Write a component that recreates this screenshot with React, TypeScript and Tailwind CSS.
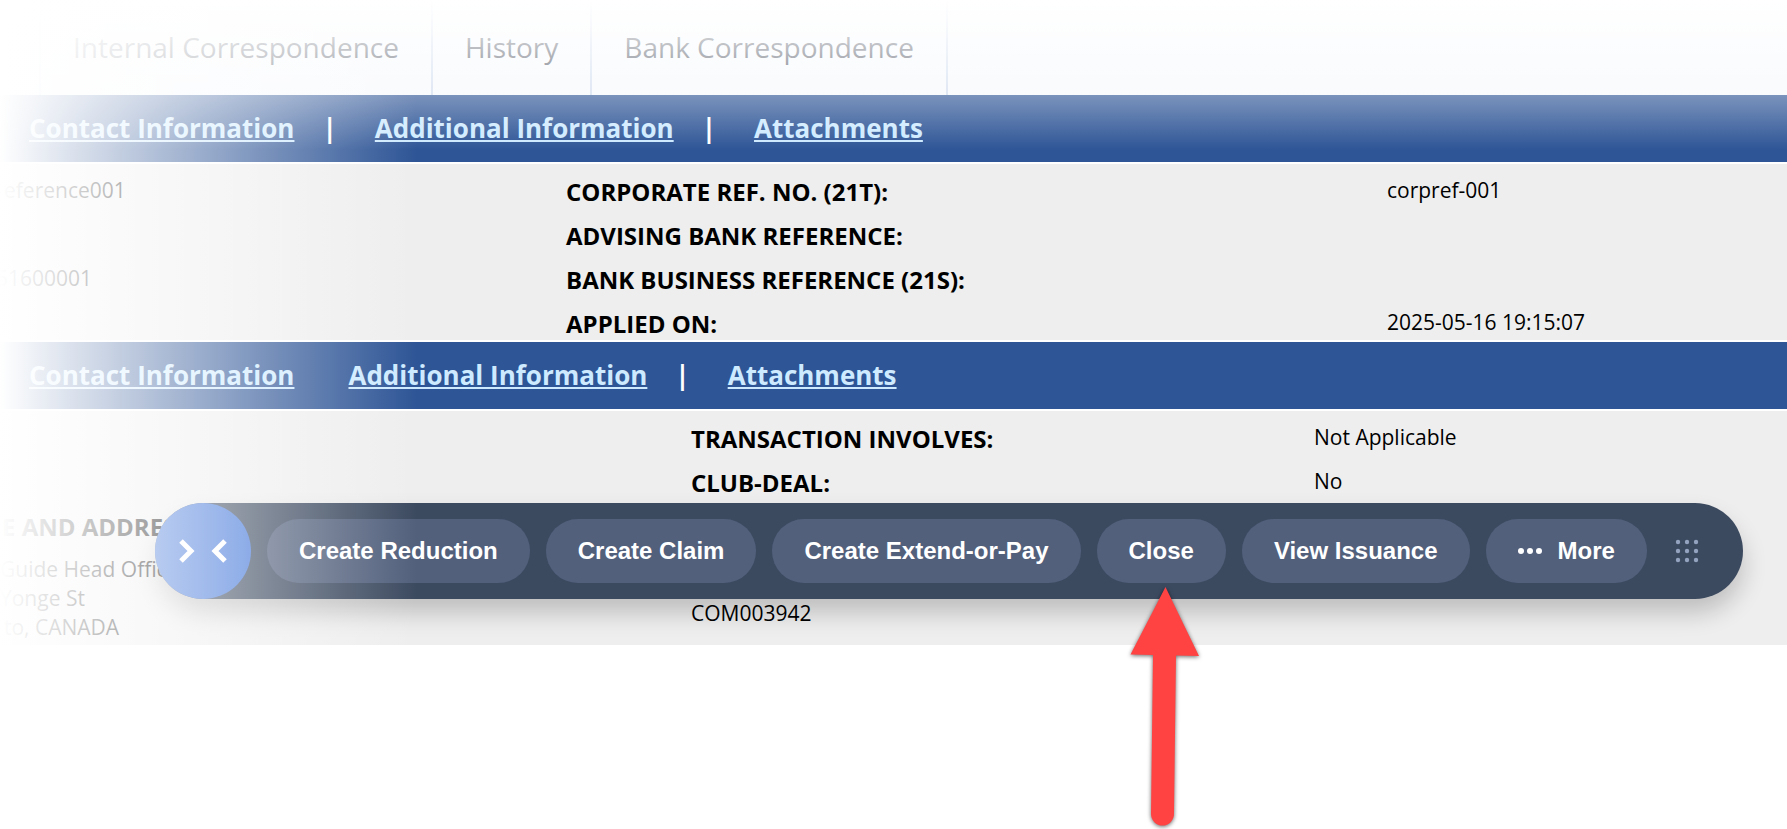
import type { ReactNode } from 'react'

const TABS = ['Internal Correspondence', 'History', 'Bank Correspondence']

function Separator() {
  return <span className="mr-[38px] ml-[28px] text-white" aria-hidden="true">|</span>
}

function SectionNav({ label, splitFirst }: { label: string; splitFirst: boolean }) {
  return (
    <nav aria-label={label} className="flex h-[69px] items-center border-b-2 border-white bg-[#2e5596] pl-[29px] text-[26px] font-bold text-[#cdeaff]">
      <a href="#contact" className="underline">Contact Information</a>
      {splitFirst ? <Separator /> : <span className="w-[54px]" />}
      <a href="#additional" className="underline">Additional Information</a>
      <Separator />
      <a href="#attachments" className="underline">Attachments</a>
    </nav>
  )
}

function Label({ children }: { children?: ReactNode }) {
  return <dt className="text-2xl leading-8 font-bold">{children}</dt>
}

function Value({ children }: { children?: ReactNode }) {
  return <dd className="text-[21px] leading-7">{children}</dd>
}

function ActionButton({ children }: { children: ReactNode }) {
  return (
    <button type="button" className="flex h-16 items-center gap-4 rounded-full bg-[#52607c] px-8 text-2xl font-bold hover:bg-[#5f6e8c]">
      {children}
    </button>
  )
}

function Arrow() {
  return (
    <svg className="pointer-events-none absolute top-16 left-[30px] z-20 h-[246px] w-[76px] max-w-none" viewBox="0 0 76 246" fill="#ff4343"
      style={{ filter: 'drop-shadow(0 1px 2px rgba(0,0,0,0.6))' }} aria-hidden="true">
      <path d="M38.5 4 L72 73 L49 72.5 L47 231 A11.5 11.5 0 0 1 24 231 L26 72 L3.5 71.5 Z" />
    </svg>
  )
}

function Toolbar() {
  return (
    <div role="toolbar" aria-label="Actions"
      className="absolute right-11 bottom-[46px] left-[155px] flex h-24 items-center gap-4 rounded-full bg-[#3c4a60] font-['Liberation_Sans',Arial,sans-serif] whitespace-nowrap text-white shadow-[0_14px_24px_rgba(0,0,0,0.2)]">
      <button type="button" aria-label="Collapse toolbar" className="flex h-24 w-24 shrink-0 items-center justify-center rounded-full bg-[#4175d8]">
        <svg className="h-6 w-12" viewBox="0 0 48 24" fill="none" stroke="currentColor" strokeWidth="5">
          <path d="M2 2 L12 12 L2 22 M46 2 L36 12 L46 22" />
        </svg>
      </button>
      <ActionButton>Create Reduction</ActionButton>
      <ActionButton>Create Claim</ActionButton>
      <ActionButton>Create Extend-or-Pay</ActionButton>
      <div className="relative">
        <ActionButton>Close</ActionButton>
        <Arrow />
      </div>
      <ActionButton>View Issuance</ActionButton>
      <ActionButton>
        <svg className="h-6 w-6" viewBox="0 0 24 24" fill="currentColor" aria-hidden="true">
          {[3, 12, 21].map((x) => <circle key={x} cx={x} cy="12" r="3" />)}
        </svg>
        More
      </ActionButton>
      <svg className="ml-3 h-6 w-6 cursor-grab" viewBox="0 0 24 24" fill="#94a3bf" aria-hidden="true">
        {[3, 12, 21].map((y) => [3, 12, 21].map((x) => <circle key={`${x}-${y}`} cx={x} cy={y} r="2.2" />))}
      </svg>
    </div>
  )
}

export default function App() {
  return (
    <div className="relative min-h-screen overflow-hidden bg-white font-['Open_Sans','Noto_Sans',sans-serif] text-black">
      {/* Tabs */}
      <div className="flex h-[95px] bg-[#f5f8fc] pl-[39px] text-[28px] text-[#2b3342]">
        {TABS.map((tab, i) => (
          <button key={tab} type="button"
            className={`border-r-2 border-[#cfdbee] px-8 pb-0.5 ${i === 0 ? 'border-l-2' : ''}`}>
            {tab}
          </button>
        ))}
      </div>

      {/* Details */}
      <SectionNav label="Details" splitFirst />
      <dl className="grid grid-cols-[566fr_821fr_400fr] gap-y-3 border-b-2 border-white bg-[#eeeeee] pt-3">
        <dd className="pl-1 text-[21px] leading-7">eference001</dd>
        <Label>CORPORATE REF. NO. (21T):</Label>
        <Value>corpref-001</Value>
        <Value />
        <Label>ADVISING BANK REFERENCE:</Label>
        <Value />
        <dd className="-ml-1 text-[21px] leading-7">51600001</dd>
        <Label>BANK BUSINESS REFERENCE (21S):</Label>
        <Value />
        <Value />
        <Label>APPLIED ON:</Label>
        <Value>2025-05-16 19:15:07</Value>
      </dl>

      {/* Parties */}
      <SectionNav label="Parties" splitFirst={false} />
      <section className="relative bg-[#eeeeee]">
        <dl className="grid grid-cols-[691fr_623fr_473fr] gap-y-3 pt-3 pb-[3px]">
          <dd className="leading-8" />
          <Label>TRANSACTION INVOLVES:</Label>
          <Value>Not Applicable</Value>
          <dd className="leading-8" />
          <Label>CLUB-DEAL:</Label>
          <Value>No</Value>
          <dt className="pl-0.5 text-2xl leading-8 font-bold">E AND ADDRESS:</dt>
          <dd className="col-span-2" />
          <dd className="text-[21px] leading-[29px]">
            <div>Guide Head Office</div>
            <div>Yonge St</div>
            <div className="pl-1">to, CANADA</div>
          </dd>
          <dd className="pt-11 text-[21px] leading-7">COM003942</dd>
          <dd />
        </dl>
        <Toolbar />
      </section>

      {/* Edge fades */}
      <div className="pointer-events-none absolute inset-x-0 top-0 h-[150px] bg-linear-to-b from-white to-white/0" />
      <div className="pointer-events-none absolute inset-y-0 left-0 w-[417px] bg-linear-to-r from-white to-white/0" />
    </div>
  )
}
